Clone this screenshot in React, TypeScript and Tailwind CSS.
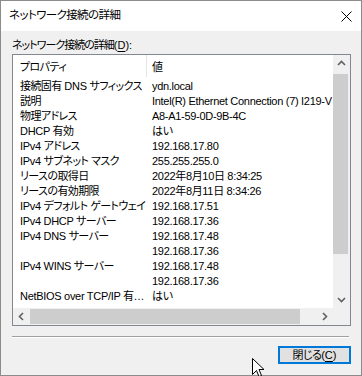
import React from 'react'

const rows: [string, string][] = [
  ['接続固有 DNS サフィックス', 'ydn.local'],
  ['説明', 'Intel(R) Ethernet Connection (7) I219-V'],
  ['物理アドレス', 'A8-A1-59-0D-9B-4C'],
  ['DHCP 有効', 'はい'],
  ['IPv4 アドレス', '192.168.17.80'],
  ['IPv4 サブネット マスク', '255.255.255.0'],
  ['リースの取得日', '2022年8月10日 8:34:25'],
  ['リースの有効期限', '2022年8月11日 8:34:26'],
  ['IPv4 デフォルト ゲートウェイ', '192.168.17.51'],
  ['IPv4 DHCP サーバー', '192.168.17.36'],
  ['IPv4 DNS サーバー', '192.168.17.48'],
  ['', '192.168.17.36'],
  ['IPv4 WINS サーバー', '192.168.17.48'],
  ['', '192.168.17.36'],
  ['NetBIOS over TCP/IP 有…', 'はい'],
]

// narrow the kana/kanji runs a bit, MS UI Gothic is tighter than Noto
function Jp({ t, cjk, latin }: { t: string; cjk: string; latin?: string }) {
  const parts = t.split(/([\u3000-\u30ff\u4e00-\u9fff\uff00-\uffef]+)/)
  return (
    <>
      {parts.map((p, i) =>
        p === '' ? null : (
          <span key={i} className={i % 2 ? cjk : latin}>
            {p}
          </span>
        ),
      )}
    </>
  )
}

function Chevron({ dir }: { dir: 'up' | 'down' | 'left' | 'right' }) {
  const pts = {
    up: '1,6 4.5,2.5 8,6',
    down: '1,3 4.5,6.5 8,3',
    left: '6,1 2.5,4.5 6,8',
    right: '3,1 6.5,4.5 3,8',
  }[dir]
  return (
    <svg width="9" height="9" viewBox="0 0 9 9">
      <polyline points={pts} fill="none" stroke="#606060" strokeWidth="1.6" />
    </svg>
  )
}

export default function App() {
  return (
    <div
      className="flex h-[376px] w-[362px] flex-col border border-[#8c8c8c] bg-[#f0f0f0] text-[11px] text-black [font-family:'Liberation_Sans','Noto_Sans_CJK_JP',sans-serif] [font-feature-settings:'palt']"
    >
      {/* title bar */}
      <div className="flex h-[30px] shrink-0 items-center justify-between bg-white pl-[8px] pr-[9px]">
        <span className="text-[11.5px] tracking-[-0.6px]">ネットワーク接続の詳細</span>
        <svg width="11" height="11" viewBox="0 0 11 11">
          <path d="M0.5 0.5 L10.5 10.5 M10.5 0.5 L0.5 10.5" stroke="#000" strokeWidth="1" />
        </svg>
      </div>

      <div className="flex flex-col pl-[11px]">
        <div className="mt-[7px] h-[15px] leading-[15px]">
          <Jp t="ネットワーク接続の詳細" cjk="tracking-[-1px]" />
          (<span className="underline underline-offset-2">D</span>):
        </div>

        {/* list view */}
        <div className="mt-[1px] grid h-[272px] w-[339px] grid-cols-[320px_17px] grid-rows-[253px_17px] border border-[#828790] bg-white">
          <div className="overflow-hidden">
            <div className="flex h-[24px] items-center">
              <div className="relative w-[134px] shrink-0 pl-[7px]">
                <Jp t="プロパティ" cjk="tracking-[-0.6px]" />
                <span className="absolute right-0 top-[-7px] h-[25px] border-r border-[#e5e5e5]" />
              </div>
              <div className="pl-[5px]">値</div>
            </div>
            {rows.map(([k, v], i) => (
              <div key={i} className="flex h-[15px] items-center whitespace-nowrap">
                <div className="w-[134px] shrink-0 overflow-hidden pl-[7px]">
                  <Jp t={k} cjk="tracking-[-0.6px]" latin="tracking-[-0.3px]" />
                </div>
                <div className="pl-[5px]">
                  <Jp t={v} cjk="tracking-[-0.4px]" latin="tracking-[-0.3px]" />
                </div>
              </div>
            ))}
          </div>

          {/* vertical scrollbar */}
          <div className="flex flex-col bg-[#f0f0f0]">
            <div className="flex h-[17px] items-center justify-center">
              <Chevron dir="up" />
            </div>
            <div className="mt-[2px] h-[180px] w-[15px] bg-[#cdcdcd]" />
            <div className="flex-1" />
            <div className="flex h-[17px] items-center justify-center">
              <Chevron dir="down" />
            </div>
          </div>

          {/* horizontal scrollbar */}
          <div className="flex items-center bg-[#f0f0f0]">
            <div className="flex h-[17px] w-[17px] items-center justify-center">
              <Chevron dir="left" />
            </div>
            <div className="h-[15px] w-[270px] bg-[#cdcdcd]" />
            <div className="flex-1" />
            <div className="flex h-[17px] w-[17px] items-center justify-center">
              <Chevron dir="right" />
            </div>
          </div>
          <div className="bg-[#f0f0f0]" />
        </div>

        <div className="mt-[10px] w-[337px] border-t border-[#a0a0a0] border-b border-b-white" />

        <div className="mt-[8px] flex w-[339px] justify-end">
          <div className="flex h-[18px] w-[73px] items-center justify-center border-2 border-[#0078d7] bg-[#e1e1e1]">
            <Jp t="閉じる" cjk="tracking-[-0.6px]" />(<span className="underline underline-offset-2">C</span>)
          </div>
        </div>
      </div>

      {/* mouse cursor */}
      <svg className="pointer-events-none absolute left-[252px] top-[358px]" width="13" height="20" viewBox="0 0 13 20">
        <path d="M0.5 0.5 L0.5 16.5 L4.5 12.5 L7 18.5 L9.5 17.5 L7 11.5 L12 11.5 Z" fill="#fff" stroke="#000" strokeWidth="1" />
      </svg>
    </div>
  )
}
